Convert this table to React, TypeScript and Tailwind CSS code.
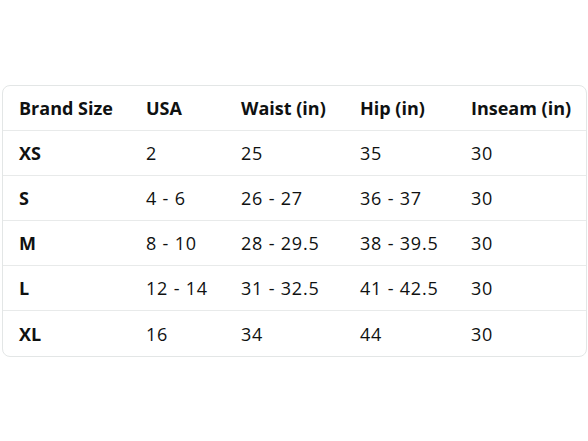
const header = ["Brand Size", "USA", "Waist (in)", "Hip (in)", "Inseam (in)"];

const rows = [
  ["XS", "2", "25", "35", "30"],
  ["S", "4 - 6", "26 - 27", "36 - 37", "30"],
  ["M", "8 - 10", "28 - 29.5", "38 - 39.5", "30"],
  ["L", "12 - 14", "31 - 32.5", "41 - 42.5", "30"],
  ["XL", "16", "34", "44", "30"],
];

const gridCols = "grid grid-cols-[127px_95px_119px_111px_1fr] items-center pl-[16px] h-[45px] leading-none";

export default function App() {
  return (
    <div className="w-[588px] h-[441px] bg-white pt-[85px] pl-[2px] font-['Open_Sans','Noto_Sans',sans-serif] text-[#0f1111] text-[18px]">
      <div className="w-[585px] border border-[#e3e6e6] rounded-[8px] overflow-hidden">
        <div className={`${gridCols} border-b border-[#e8eaea] font-bold`}>
          {header.map((h) => (
            <span key={h} className="whitespace-nowrap">{h}</span>
          ))}
        </div>
        {rows.map((r, i) => (
          <div
            key={r[0]}
            className={`${gridCols} ${i < rows.length - 1 ? "border-b border-[#e8eaea]" : ""}`}
          >
            {r.map((c, j) => (
              <span key={j} className={j === 0 ? "font-bold" : "tracking-[0.8px] whitespace-nowrap"}>{c}</span>
            ))}
          </div>
        ))}
      </div>
    </div>
  );
}
